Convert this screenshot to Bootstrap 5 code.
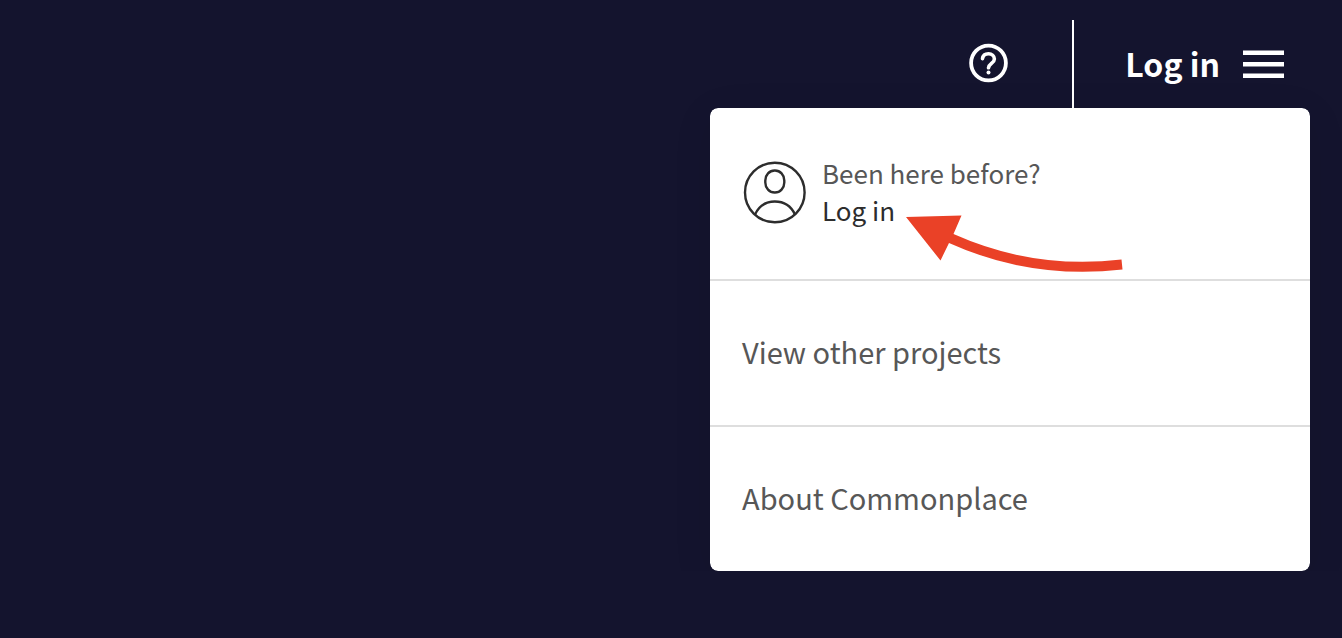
<!DOCTYPE html>
<html lang="en">
<head>
<meta charset="utf-8">
<meta name="viewport" content="width=device-width, initial-scale=1">
<title>Commonplace</title>
<link href="https://cdn.jsdelivr.net/npm/bootstrap@5.3.0/dist/css/bootstrap.min.css" rel="stylesheet">
<style>
body { background: #14142e; font-family: "Noto Sans CJK SC", sans-serif; }
.site-bar { height: 108px; padding: 20px 58px 0 0; }
.help-btn { width: 40px; height: 40px; margin: 23px 64px 0 0; }
.account-btn { border-left: 2px solid #fff; padding-left: 51px; gap: 23px; color: #fff; font-size: 32px; font-weight: 700; line-height: 48px; }
.account-btn > span { padding-bottom: 2px; }
.account-menu { width: 600px; max-width: calc(100% - 32px); margin-right: 32px; border-radius: 8px; box-shadow: 0 8px 40px rgba(0, 0, 0, .08); }
.menu-row { border: 0; color: #575757; font-size: 29px; line-height: 44px; padding: 48px 32px 52px; }
.menu-row + .menu-row { border-top: 2px solid #dedede; }
.login-row { font-size: 26px; line-height: 37px; padding: 48px 32px 49px; gap: 15px; }
.login-text { padding-bottom: 4px; }
.login-row { padding-top: 46px; padding-bottom: 47px; }
.login-name { color: #2d2d2d; }
.pointer-arrow { left: 196px; top: 106px; }
</style>
</head>
<body>
<header class="site-bar d-flex justify-content-end align-items-start">
  <button type="button" class="help-btn btn p-0 border-0 d-flex" aria-label="Help">
    <svg width="40" height="40" viewBox="0 0 40 40" fill="none" stroke="#fff" stroke-linecap="round" stroke-linejoin="round" aria-hidden="true">
      <circle cx="20.500" cy="20" r="17.400" stroke-width="3.800"/>
      <path d="M14.500 15.600C15 12.200 17.500 10.700 20.500 10.700C23.800 10.700 26.400 13 26.400 16C26.400 20.200 20.800 20.600 20.500 24.800" stroke-width="3.600"/>
      <circle cx="20.500" cy="29.600" r="2" fill="#fff" stroke="none"/>
    </svg>
  </button>
  <button type="button" class="account-btn btn rounded-0 border-top-0 border-end-0 border-bottom-0 py-0 pe-0 h-100 d-flex align-items-center" aria-expanded="true" aria-controls="account-menu">
    <span>Log in</span>
    <svg width="41" height="28" viewBox="0 0 41 28" fill="#fff" aria-hidden="true"><path d="M0 .5h41V5H0zM0 12h41v4.500H0zM0 23.500h41V28H0z"/></svg>
  </button>
</header>
<main class="d-flex justify-content-end">
  <nav id="account-menu" class="account-menu list-group overflow-hidden" aria-label="Account">
    <a href="#" class="menu-row login-row list-group-item d-flex align-items-center">
      <svg width="65" height="64" viewBox="0 0 65 64" fill="none" stroke="#2d2d2d" stroke-width="2.400" aria-hidden="true">
        <circle cx="32.800" cy="31.500" r="29.800"/>
        <rect x="23.300" y="9.500" width="19" height="22" rx="9.300" ry="10"/>
        <path d="M13 53.500C17 45 24 40.500 32.800 40.500S49 45 53 53.500"/>
      </svg>
      <span class="login-text d-flex flex-column"><span>Been here before?</span><span class="login-name">Log in</span></span>
      <svg class="pointer-arrow position-absolute" width="218" height="58" viewBox="0 0 218 58" fill="#ea4127" aria-hidden="true">
        <path d="M0 3L55.500 1.500L47.500 20Q128 56 215.500 45.500L216.500 55.500Q125 66 43 29L34.500 46.500Z"/>
      </svg>
    </a>
    <a href="#" class="menu-row list-group-item">View other projects</a>
    <a href="#" class="menu-row list-group-item">About Commonplace</a>
  </nav>
</main>
<script src="https://cdn.jsdelivr.net/npm/bootstrap@5.3.0/dist/js/bootstrap.bundle.min.js"></script>
</body>
</html>
